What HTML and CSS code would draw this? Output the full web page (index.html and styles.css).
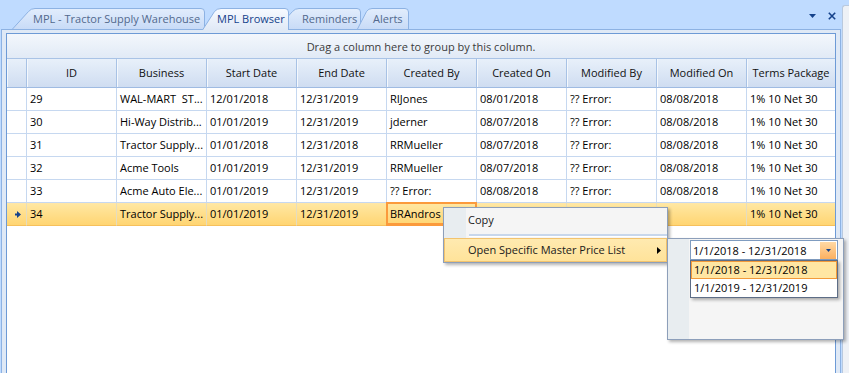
FILE: index.html
```html
<!DOCTYPE html>
<html>
<head>
<meta charset="utf-8">
<link rel="stylesheet" href="styles.css">
</head>
<body>
<div class="app">
  <div class="main">
    <div class="tabstrip">
      <div class="tabs">
        <div class="tab t1">
          <svg class="tab-bg" width="193" height="21" viewBox="0 0 193 21"><defs><linearGradient id="gi" x1="0" y1="0" x2="0" y2="1"><stop offset="0" stop-color="#e2edfc"/><stop offset="1" stop-color="#c8dbf7"/></linearGradient></defs><path d="M0.5 21 L16.5 3.5 Q19 0.5 23 0.5 L189 0.5 Q192.5 0.5 192.5 4 L192.5 21" fill="url(#gi)" stroke="#8db2e3"/></svg>
          <span class="tab-label">MPL - Tractor Supply Warehouse</span>
        </div>
        <div class="tab t2 active">
          <svg class="tab-bg" width="87" height="22" viewBox="0 0 87 22"><defs><linearGradient id="ga" x1="0" y1="0" x2="0" y2="1"><stop offset="0" stop-color="#f7faff"/><stop offset="1" stop-color="#e0e9f6"/></linearGradient></defs><path d="M0.5 22 L12.5 3.5 Q15 0.5 19 0.5 L83 0.5 Q86.5 0.5 86.5 4 L86.5 22" fill="url(#ga)" stroke="#8db2e3"/></svg>
          <span class="tab-label">MPL Browser</span>
        </div>
        <div class="tab t3">
          <svg class="tab-bg" width="85" height="21" viewBox="0 0 85 21"><path d="M0.5 21 L16.5 3.5 Q19 0.5 23 0.5 L81 0.5 Q84.5 0.5 84.5 4 L84.5 21" fill="url(#gi)" stroke="#8db2e3"/></svg>
          <span class="tab-label">Reminders</span>
        </div>
        <div class="tab t4">
          <svg class="tab-bg" width="52" height="21" viewBox="0 0 52 21"><path d="M0.5 21 L9.5 3.5 Q11.5 0.5 15 0.5 L48 0.5 Q51.5 0.5 51.5 4 L51.5 21" fill="url(#gi)" stroke="#8db2e3"/></svg>
          <span class="tab-label">Alerts</span>
        </div>
      </div>
      <div class="controls">
        <svg width="7" height="4" viewBox="0 0 7 4"><path d="M0 0H7L3.5 4Z" fill="#15428b"/></svg>
        <svg width="8" height="8" viewBox="0 0 8 8"><path d="M0.8 0.8L7.2 7.2M7.2 0.8L0.8 7.2" stroke="#15428b" stroke-width="1.6"/></svg>
      </div>
    </div>
    <div class="panel">
      <div class="grid">
        <div class="group-panel">Drag a column here to group by this column.</div>
        <div class="row header">
          <div class="cell ind"></div>
          <div class="cell">ID</div>
          <div class="cell">Business</div>
          <div class="cell">Start Date</div>
          <div class="cell">End Date</div>
          <div class="cell">Created By</div>
          <div class="cell">Created On</div>
          <div class="cell">Modified By</div>
          <div class="cell">Modified On</div>
          <div class="cell last">Terms Package</div>
        </div>
        <div class="row">
          <div class="cell ind"></div>
          <div class="cell">29</div>
          <div class="cell">WAL-MART&nbsp; ST...</div>
          <div class="cell">12/01/2018</div>
          <div class="cell">12/31/2019</div>
          <div class="cell">RIJones</div>
          <div class="cell">08/01/2018</div>
          <div class="cell">?? Error:</div>
          <div class="cell">08/08/2018</div>
          <div class="cell last">1% 10 Net 30</div>
        </div>
        <div class="row">
          <div class="cell ind"></div>
          <div class="cell">30</div>
          <div class="cell">Hi-Way Distrib...</div>
          <div class="cell">01/01/2019</div>
          <div class="cell">12/31/2019</div>
          <div class="cell">jderner</div>
          <div class="cell">08/07/2018</div>
          <div class="cell">?? Error:</div>
          <div class="cell">08/08/2018</div>
          <div class="cell last">1% 10 Net 30</div>
        </div>
        <div class="row">
          <div class="cell ind"></div>
          <div class="cell">31</div>
          <div class="cell">Tractor Supply...</div>
          <div class="cell">01/01/2018</div>
          <div class="cell">12/31/2018</div>
          <div class="cell">RRMueller</div>
          <div class="cell">08/07/2018</div>
          <div class="cell">?? Error:</div>
          <div class="cell">08/08/2018</div>
          <div class="cell last">1% 10 Net 30</div>
        </div>
        <div class="row">
          <div class="cell ind"></div>
          <div class="cell">32</div>
          <div class="cell">Acme Tools</div>
          <div class="cell">01/01/2019</div>
          <div class="cell">12/31/2019</div>
          <div class="cell">RRMueller</div>
          <div class="cell">08/07/2018</div>
          <div class="cell">?? Error:</div>
          <div class="cell">08/08/2018</div>
          <div class="cell last">1% 10 Net 30</div>
        </div>
        <div class="row">
          <div class="cell ind"></div>
          <div class="cell">33</div>
          <div class="cell">Acme Auto Ele...</div>
          <div class="cell">01/01/2019</div>
          <div class="cell">12/31/2019</div>
          <div class="cell">?? Error:</div>
          <div class="cell">08/08/2018</div>
          <div class="cell">?? Error:</div>
          <div class="cell">08/08/2018</div>
          <div class="cell last">1% 10 Net 30</div>
        </div>
        <div class="row selected">
          <div class="cell ind"><svg width="6" height="7" viewBox="0 0 6 7"><path d="M0 2.5H2V0L6 3.5L2 7V4.5H0Z" fill="#15428b"/></svg></div>
          <div class="cell">34</div>
          <div class="cell">Tractor Supply...</div>
          <div class="cell">01/01/2019</div>
          <div class="cell">12/31/2019</div>
          <div class="cell focused">BRAndros</div>
          <div class="cell"></div>
          <div class="cell"></div>
          <div class="cell"></div>
          <div class="cell last">1% 10 Net 30</div>
        </div>
      </div>
    </div>
  </div>
  <div class="side"></div>
</div>

<div class="menu">
  <div class="menu-item">Copy</div>
  <div class="menu-sep"></div>
  <div class="menu-item hot">Open Specific Master Price List<svg class="sub-arrow" width="4" height="7" viewBox="0 0 4 7"><path d="M0 0L4 3.5L0 7Z" fill="#000"/></svg></div>
</div>

<div class="submenu">
  <div class="combo">
    <span class="combo-text">1/1/2018 - 12/31/2018</span>
    <span class="combo-btn"><svg width="5" height="3" viewBox="0 0 5 3"><path d="M0 0H5L2.5 3Z" fill="#15428b"/></svg></span>
  </div>
  <div class="droplist">
    <div class="drop-item hot">1/1/2018 - 12/31/2018</div>
    <div class="drop-item">1/1/2019 - 12/31/2019</div>
  </div>
</div>
</body>
</html>
```

FILE: styles.css
```css
* { box-sizing: border-box; }
html, body { margin: 0; padding: 0; }
body {
  width: 849px;
  height: 373px;
  overflow: hidden;
  background: #bfdbff;
  font-family: "Open Sans", "Noto Sans", sans-serif;
  font-size: 11px;
  color: #000;
  position: relative;
}
.app { display: flex; height: 373px; }
.main { width: 842px; display: flex; flex-direction: column; }
.side {
  width: 7px;
  margin-top: 5px;
  background: #eef1f6;
  border-left: 1px solid #b9c9de;
  border-top: 1px solid #b9c9de;
  border-top-left-radius: 3px;
}

/* tabs */
.tabstrip {
  height: 29px;
  display: flex;
  position: relative;
  z-index: 2;
}
.tabs { display: flex; align-items: flex-end; padding-left: 12px; }
.tab {
  position: relative;
  height: 21px;
  display: flex;
  align-items: center;
  color: #52698d;
  font-size: 11px;
  white-space: nowrap;
}
.tab-bg { position: absolute; left: 0; top: 0; }
.tab-label { position: relative; }
.t1 { width: 193px; padding-left: 21px; z-index: 1; }
.t2 { width: 87px; padding-left: 15px; margin-left: -3px; z-index: 4; height: 22px; margin-bottom: -1px; color: #15428b; }
.t2 .tab-label { top: -1px; }
.t3 { width: 85px; padding-left: 26px; margin-left: -13px; z-index: 1; }
.t4 { width: 52px; padding-left: 16px; margin-left: -4px; z-index: 2; }
.controls {
  margin-left: auto;
  margin-top: 12px;
  margin-right: 6px;
  display: flex;
  gap: 12px;
  align-items: center;
  height: 8px;
}

/* panel */
.panel {
  flex: 1;
  width: 840px;
  margin-left: 1px;
  border: 1px solid #8db2e3;
  border-bottom: none;
  background: #dfe9f6;
  padding: 3px 4px 0 4px;
  position: relative;
  z-index: 1;
}
.grid {
  height: 100%;
  background: #fff;
  border: 1px solid #6d9ad6;
  border-bottom: none;
}
.group-panel {
  height: 25px;
  border-bottom: 1px solid #a9c3e6;
  background: linear-gradient(#f3f7fc, #e1eaf6);
  color: #3b3b3b;
  text-align: center;
  padding-top: 5px;
  line-height: 16px;
}
.row {
  display: grid;
  grid-template-columns: 20px repeat(8, 90px) 88px;
  height: 23px;
}
.cell {
  border-right: 1px solid #c6d8f0;
  border-bottom: 1px solid #c6d8f0;
  padding-left: 3px;
  line-height: 22px;
  white-space: nowrap;
  overflow: hidden;
}
.cell.last { border-right: none; }
.header { height: 29px; }
.header .cell {
  background: linear-gradient(#e8f0fa, #cfddf1);
  border-right: 1px solid #a8c2e5;
  border-bottom: 1px solid #9fbbe2;
  box-shadow: inset 1px 0 0 #f4f8fd;
  text-align: center;
  padding-left: 0;
  line-height: 28px;
  color: #111;
}
.header .cell.last { border-right: none; }
.cell.ind { padding-left: 0; display: flex; align-items: center; justify-content: center; }

.selected { background: linear-gradient(#ffe8a4, #ffd470); }
.selected .cell {
  border-right-color: #e4dcc0;
  border-bottom: 1px solid #f6c05c;
  box-shadow: inset 0 1px 0 #fee6a8;
}
.selected .cell.ind svg { margin-left: 2px; }
.cell.focused {
  box-shadow: inset 0 0 0 2px #fb9a3c;
  margin-left: -1px;
  padding-left: 4px;
  border-right: none;
  width: 91px;
  margin-top: -1px;
  height: 24px;
  border-bottom: 1px solid #fb9a3c;
  line-height: 23px;
}

/* context menu */
.menu {
  position: absolute;
  left: 443px;
  top: 207px;
  width: 225px;
  height: 56px;
  border: 1px solid #8d9fba;
  background: linear-gradient(90deg, #e8edf0 0, #e8edf0 22px, #f5f5f5 22px);
  box-shadow: 2px 2px 3px rgba(0,0,0,.3);
  z-index: 10;
  font-size: 11px;
  color: #1a1a1a;
}
.menu-item {
  height: 24px;
  line-height: 24px;
  padding-left: 24px;
  position: relative;
}
.menu-sep {
  height: 6px;
  margin-left: 25px;
  border-top: 2px solid transparent;
}
.menu-sep::after {
  content: "";
  display: block;
  height: 2px;
  background: #c8d7eb;
  border-bottom: 1px solid #fff;
}
.menu-item.hot {
  background: linear-gradient(#ffeab0, #ffe39a);
  border: 1px solid #f2c36e;
  line-height: 22px;
  padding-left: 23px;
}
.sub-arrow { position: absolute; right: 5px; top: 8px; }

.submenu {
  position: absolute;
  left: 667px;
  top: 238px;
  width: 177px;
  height: 102px;
  border: 1px solid #8d9fba;
  background: linear-gradient(90deg, #e8edf0 0, #e8edf0 21px, #f5f5f5 21px);
  box-shadow: 2px 2px 3px rgba(0,0,0,.3);
  z-index: 11;
  padding: 1px 0 0 22px;
  font-size: 11px;
}
.combo {
  width: 148px;
  height: 20px;
  border: 1px solid #7f9cc0;
  background: #fff;
  display: flex;
  align-items: center;
  padding-left: 2px;
}
.combo-text { flex: 1; }
.combo-btn {
  width: 16px;
  height: 17px;
  margin-right: 1px;
  background: linear-gradient(#ffd9a4, #fcb060);
  display: flex;
  align-items: center;
  justify-content: center;
}
.droplist {
  width: 148px;
  height: 38px;
  border: 1px solid #5d6d86;
  background: #fff;
  box-shadow: 2px 2px 3px rgba(0,0,0,.3);
}
.drop-item {
  height: 18px;
  line-height: 17px;
  padding-left: 3px;
}
.drop-item.hot {
  background: #ffe6a3;
  border: 1px solid #f29a3a;
  padding-left: 2px;
  line-height: 15px;
}
```
